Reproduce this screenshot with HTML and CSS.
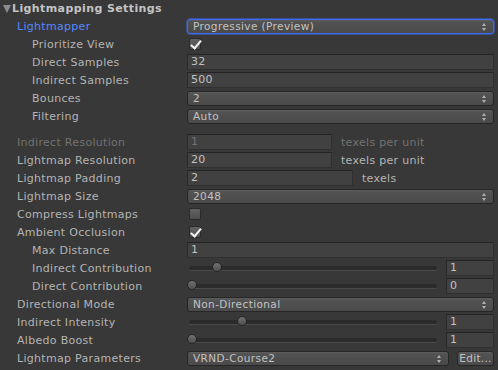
FILE: index.html
```html
<!DOCTYPE html>
<html>
<head>
<meta charset="utf-8">
<link rel="stylesheet" href="styles.css">
</head>
<body>
<div class="inspector">
  <div class="header"><span class="foldout"></span>Lightmapping Settings</div>

  <div class="row"><div class="label focus">Lightmapper</div><div class="popup focused">Progressive (Preview)<span class="arrows"></span></div></div>
  <div class="row"><div class="label sub">Prioritize View</div><div class="check on"></div></div>
  <div class="row"><div class="label sub">Direct Samples</div><div class="field">32</div></div>
  <div class="row"><div class="label sub">Indirect Samples</div><div class="field">500</div></div>
  <div class="row"><div class="label sub">Bounces</div><div class="popup">2<span class="arrows"></span></div></div>
  <div class="row"><div class="label sub">Filtering</div><div class="popup">Auto<span class="arrows"></span></div></div>

  <div class="group">
    <div class="row"><div class="label disabled">Indirect Resolution</div><div class="field short disabled">1</div><div class="unit disabled">texels per unit</div></div>
    <div class="row"><div class="label">Lightmap Resolution</div><div class="field short">20</div><div class="unit">texels per unit</div></div>
    <div class="row"><div class="label">Lightmap Padding</div><div class="field medium">2</div><div class="unit wide">texels</div></div>
    <div class="row"><div class="label">Lightmap Size</div><div class="popup">2048<span class="arrows"></span></div></div>
    <div class="row"><div class="label">Compress Lightmaps</div><div class="check"></div></div>
    <div class="row"><div class="label">Ambient Occlusion</div><div class="check on"></div></div>
    <div class="row"><div class="label sub">Max Distance</div><div class="field">1</div></div>
    <div class="row"><div class="label sub">Indirect Contribution</div><div class="slider"><div class="track"><span class="thumb" style="left:10%"></span></div><div class="field value">1</div></div></div>
    <div class="row"><div class="label sub">Direct Contribution</div><div class="slider"><div class="track"><span class="thumb" style="left:0%"></span></div><div class="field value">0</div></div></div>
    <div class="row"><div class="label">Directional Mode</div><div class="popup">Non-Directional<span class="arrows"></span></div></div>
    <div class="row"><div class="label">Indirect Intensity</div><div class="slider"><div class="track"><span class="thumb" style="left:20%"></span></div><div class="field value">1</div></div></div>
    <div class="row"><div class="label">Albedo Boost</div><div class="slider"><div class="track"><span class="thumb" style="left:0%"></span></div><div class="field value">1</div></div></div>
    <div class="row"><div class="label">Lightmap Parameters</div><div class="popup">VRND-Course2<span class="arrows"></span></div><div class="button">Edit...</div></div>
  </div>
</div>
</body>
</html>
```

FILE: styles.css
```css
html, body {
  margin: 0;
  padding: 0;
  background: #383838;
}
body {
  width: 498px;
  height: 370px;
  overflow: hidden;
  font-family: "DejaVu Sans", sans-serif;
  font-size: 11px;
  color: #b4b4b4;
}
.inspector {
  display: flex;
  flex-direction: column;
}
.header {
  height: 17px;
  display: flex;
  align-items: center;
  font-weight: bold;
  font-size: 11px;
  color: #c4c4c4;
  letter-spacing: 0.4px;
}
.foldout {
  width: 0;
  height: 0;
  border-left: 4.5px solid transparent;
  border-right: 4.5px solid transparent;
  border-top: 8px solid #8c8c8c;
  margin: 0 1px 0 3px;
}
.group {
  margin-top: 8px;
  display: flex;
  flex-direction: column;
}
.row {
  height: 18px;
  display: flex;
  align-items: center;
  padding-right: 4px;
}
.label {
  width: 187px;
  flex: none;
  box-sizing: border-box;
  padding-left: 17px;
  white-space: nowrap;
  letter-spacing: 0.3px;
}
.label.sub { padding-left: 32px; }
.label.focus { color: #5588ff; }
.label.disabled, .unit.disabled, .field.disabled { color: #727272; }

.field {
  flex: 1;
  height: 16px;
  box-sizing: border-box;
  background: #414141;
  border: 1px solid #303030;
  border-top-color: #242424;
  border-left-color: #2a2a2a;
  color: #c2c2c2;
  padding-left: 3px;
  line-height: 14px;
  letter-spacing: 0.3px;
}
.field.short { flex: none; width: 145px; }
.field.medium { flex: none; width: 166px; }
.unit {
  margin-left: 9px;
  color: #b4b4b4;
  letter-spacing: 0.3px;
}
.unit.wide { margin-left: 9px; }

.popup {
  flex: 1;
  position: relative;
  height: 15px;
  box-sizing: border-box;
  border: 1px solid #262626;
  border-radius: 3px;
  background: linear-gradient(#5e5e5e 0, #525252 2px, #4a4a4a 100%);
  color: #c2c2c2;
  padding-left: 5px;
  line-height: 13px;
  letter-spacing: 0.4px;
  font-size: 10.5px;
}
.popup.focused {
  border-color: #3d6cf2;
  box-shadow: 0 0 0 0.5px #3d6cf2;
}
.arrows {
  position: absolute;
  right: 6px;
  top: 3px;
  width: 5px;
  height: 8px;
}
.arrows::before, .arrows::after {
  content: "";
  position: absolute;
  left: 0;
  border-left: 2.5px solid transparent;
  border-right: 2.5px solid transparent;
}
.arrows::before { top: 0; border-bottom: 3px solid #b0b0b0; }
.arrows::after { bottom: 0; border-top: 3px solid #b0b0b0; }

.check {
  width: 12px;
  height: 12px;
  box-sizing: border-box;
  margin-left: 2px;
  border-radius: 2px;
  border: 1px solid #2a2a2a;
  background: linear-gradient(#626262, #4f4f4f);
  position: relative;
}
.check.on::after {
  content: "";
  position: absolute;
  left: 3px;
  top: -1px;
  width: 4px;
  height: 9px;
  border: solid #f2f2f2;
  border-width: 0 2.5px 2.5px 0;
  transform: rotate(40deg);
}

.slider {
  flex: 1;
  display: flex;
  align-items: center;
}
.track {
  flex: 1;
  position: relative;
  height: 4px;
  margin-left: 2px;
  margin-right: 9px;
  border-radius: 2px;
  background: #2b2b2b;
  border-bottom: 1px solid #4a4a4a;
}
.thumb {
  position: absolute;
  top: -3.5px;
  width: 10px;
  height: 10px;
  box-sizing: border-box;
  margin-left: -2px;
  border-radius: 50%;
  border: 1px solid #262626;
  background: linear-gradient(#707070, #505050);
}
.field.value {
  flex: none;
  width: 48px;
}
.button {
  flex: none;
  width: 37px;
  height: 15px;
  box-sizing: border-box;
  margin-left: 8px;
  border: 1px solid #262626;
  border-radius: 3px;
  background: linear-gradient(#5e5e5e 0, #525252 2px, #4a4a4a 100%);
  color: #c2c2c2;
  line-height: 13px;
  text-align: center;
  font-size: 10.5px;
  letter-spacing: 0.3px;
}
```
